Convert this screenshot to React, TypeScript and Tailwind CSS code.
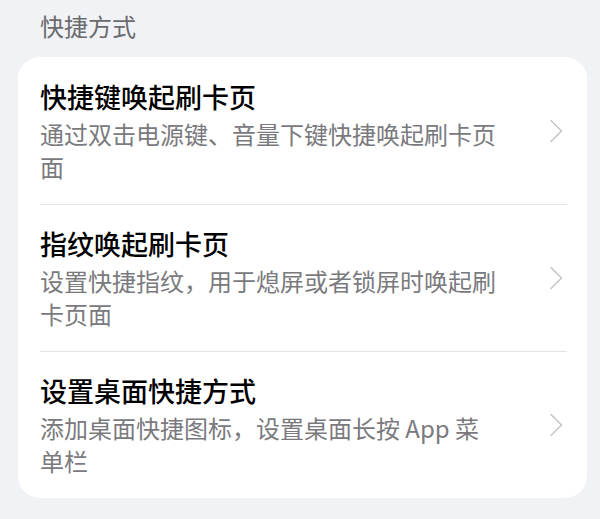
const items = [
  {
    title: "快捷键唤起刷卡页",
    desc: "通过双击电源键、音量下键快捷唤起刷卡页面",
  },
  {
    title: "指纹唤起刷卡页",
    desc: "设置快捷指纹，用于熄屏或者锁屏时唤起刷卡页面",
  },
  {
    title: "设置桌面快捷方式",
    desc: "添加桌面快捷图标，设置桌面长按 App 菜单栏",
  },
];

function Chevron() {
  return (
    <svg width="14" height="24" viewBox="0 0 14 24" fill="none" className="shrink-0">
      <path d="M2 1.5 L12.5 12 L2 22.5" stroke="#c4c4c6" strokeWidth="1.5" strokeLinecap="round" strokeLinejoin="round" />
    </svg>
  );
}

export default function App() {
  return (
    <div
      className="w-[600px] h-[519px] bg-[#f1f2f6] overflow-hidden"
      style={{ fontFamily: '"Noto Sans CJK SC", "Noto Sans", sans-serif' }}
    >
      <div className="pl-10 pt-[8px] h-[57px] text-[24px] leading-[36px] text-[#6b6b6f]">快捷方式</div>
      <div className="mx-[18px] w-[569px] bg-white rounded-[22px] pl-[22px] pr-[20px]">
        {items.map((item, i) => (
          <div
            key={item.title}
            className={`flex items-center justify-between h-[147px] ${i > 0 ? "border-t border-[#e3e3e5]" : ""}`}
          >
            <div className="w-[462px]">
              <div className="text-[27px] leading-[36px] font-medium text-black">{item.title}</div>
              <div className="mt-[2px] text-[24px] leading-[33px] text-[#7a7a7e]">{item.desc}</div>
            </div>
            <div className="pr-[4px]">
              <Chevron />
            </div>
          </div>
        ))}
      </div>
    </div>
  );
}
